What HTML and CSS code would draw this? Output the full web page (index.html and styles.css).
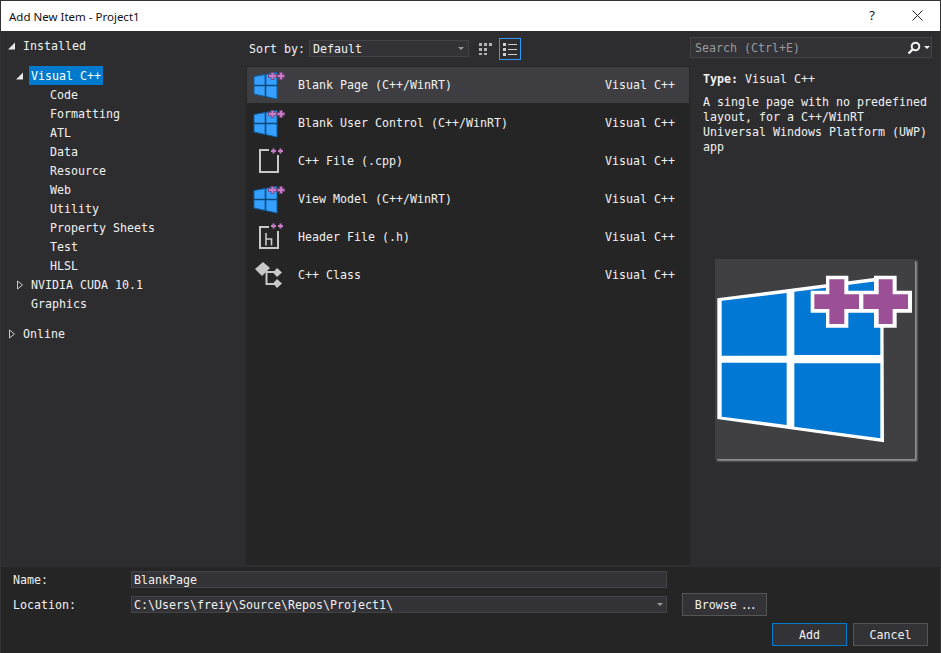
FILE: index.html
```html
<!DOCTYPE html>
<html lang="en">
<head>
    <meta charset="UTF-8">
    <meta name="viewport" content="width=device-width, initial-scale=1.0">
    <title>Add New Item - Project1</title>
    <link rel="stylesheet" href="styles.css">
</head>
<body>
    <svg class="defs" width="0" height="0">
        <symbol id="ico-win" viewBox="0 0 36 32">
            <path d="M4 7.500 27 3.500V30L4 25Z" fill="#35a0ff" stroke="#0e5f9f" stroke-width="1"/>
            <path d="M15.500 5.500V28M4 16.500H27" stroke="#0d4a78" stroke-width="1.600"/>
            <path d="M18 7H27M22.500 3V11M27 7H35M31 3V11" stroke="#7d4580" stroke-width="3.600"/>
            <path d="M19 7H26M22.500 4V10M28 7H34M31 4V10" stroke="#c77cc7" stroke-width="2"/>
        </symbol>
        <symbol id="ico-file" viewBox="0 0 36 32">
            <path d="M19 5H10V27H28V10" fill="none" stroke="#c8c8c8" stroke-width="2"/>
            <path d="M21 6H26M23.500 3.500V8.500M28 6H33M30.500 3.500V8.500" stroke="#c77cc7" stroke-width="2"/>
        </symbol>
        <symbol id="ico-header" viewBox="0 0 36 32">
            <path d="M19 6H10V27H28V10" fill="none" stroke="#c8c8c8" stroke-width="2"/>
            <path d="M16 12V24.500M16 18H21.500V24.500" fill="none" stroke="#c8c8c8" stroke-width="1.600"/>
            <path d="M21 5H26M23.500 2.500V7.500M28 5H33M30.500 2.500V7.500" stroke="#c77cc7" stroke-width="2"/>
        </symbol>
        <symbol id="ico-class" viewBox="0 0 36 32">
            <path d="M5 10 13 3 20 9 12 17Z" fill="#c8c8c8"/>
            <path d="M27 9 32 13.500 27 18 23 13.500ZM27 20 32 24.500 27 29 23 24.500Z" fill="#c8c8c8"/>
            <path d="M16 13H25M16.500 13V25H25" fill="none" stroke="#c8c8c8" stroke-width="2"/>
        </symbol>
        <symbol id="arrow-open" viewBox="0 0 8 8">
            <path d="M7 0.500V7.500H0Z" fill="#e8e8e8"/>
        </symbol>
        <symbol id="arrow-closed" viewBox="0 0 8 10">
            <path d="M1.500 1 6.500 5 1.500 9Z" fill="none" stroke="#c8c8c8" stroke-width="1"/>
        </symbol>
    </svg>

    <div class="window">
        <div class="titlebar">
            <span class="title-text">Add New Item - Project1</span>
            <span class="help">?</span>
            <svg class="close" width="11" height="11" viewBox="0 0 11 11">
                <path d="M0.500 0.500 10.500 10.500M10.500 0.500 0.500 10.500" stroke="#222" stroke-width="1"/>
            </svg>
        </div>

        <div class="main">
            <div class="sidebar">
                <div class="tree-row lvl0"><svg class="arrow"><use href="#arrow-open"/></svg><span>Installed</span></div>
                <div class="tree-group">
                    <div class="tree-row lvl1"><svg class="arrow"><use href="#arrow-open"/></svg><span class="selected">Visual C++</span></div>
                    <div class="tree-row lvl2">Code</div>
                    <div class="tree-row lvl2">Formatting</div>
                    <div class="tree-row lvl2">ATL</div>
                    <div class="tree-row lvl2">Data</div>
                    <div class="tree-row lvl2">Resource</div>
                    <div class="tree-row lvl2">Web</div>
                    <div class="tree-row lvl2">Utility</div>
                    <div class="tree-row lvl2">Property Sheets</div>
                    <div class="tree-row lvl2">Test</div>
                    <div class="tree-row lvl2">HLSL</div>
                    <div class="tree-row lvl1"><svg class="arrow"><use href="#arrow-closed"/></svg><span class="tree-label">NVIDIA CUDA 10.1</span></div>
                    <div class="tree-row lvl1-plain">Graphics</div>
                </div>
                <div class="tree-row lvl0 online"><svg class="arrow"><use href="#arrow-closed"/></svg><span>Online</span></div>
            </div>

            <div class="middle">
                <div class="toolbar">
                    <span class="sort-label">Sort by:</span>
                    <div class="combo">
                        <span>Default</span>
                        <span class="caret"></span>
                    </div>
                    <svg class="view-grid" width="16" height="16" viewBox="0 0 16 16">
                        <path d="M1 2H4V5H1ZM6 2H9V5H6ZM11 2H14V5H11ZM1 7H4V10H1ZM6 7H9V10H6ZM1 12H4V14H1ZM6 12H9V14H6Z" fill="#b4b4b4"/>
                    </svg>
                    <div class="view-list">
                        <svg width="14" height="14" viewBox="0 0 14 14">
                            <path d="M0 1H3V4H0ZM0 6H3V9H0ZM0 11H3V14H0Z" fill="#d0d0d0"/>
                            <path d="M5 2.500H14M5 7.500H14M5 12.500H14" stroke="#d0d0d0" stroke-width="1"/>
                        </svg>
                    </div>
                </div>
                <div class="item-list">
                    <div class="item active">
                        <svg class="item-icon"><use href="#ico-win"/></svg>
                        <span class="item-name">Blank Page (C++/WinRT)</span>
                        <span class="item-lang">Visual C++</span>
                    </div>
                    <div class="item">
                        <svg class="item-icon"><use href="#ico-win"/></svg>
                        <span class="item-name">Blank User Control (C++/WinRT)</span>
                        <span class="item-lang">Visual C++</span>
                    </div>
                    <div class="item">
                        <svg class="item-icon"><use href="#ico-file"/></svg>
                        <span class="item-name">C++ File (.cpp)</span>
                        <span class="item-lang">Visual C++</span>
                    </div>
                    <div class="item">
                        <svg class="item-icon"><use href="#ico-win"/></svg>
                        <span class="item-name">View Model (C++/WinRT)</span>
                        <span class="item-lang">Visual C++</span>
                    </div>
                    <div class="item">
                        <svg class="item-icon"><use href="#ico-header"/></svg>
                        <span class="item-name">Header File (.h)</span>
                        <span class="item-lang">Visual C++</span>
                    </div>
                    <div class="item">
                        <svg class="item-icon"><use href="#ico-class"/></svg>
                        <span class="item-name">C++ Class</span>
                        <span class="item-lang">Visual C++</span>
                    </div>
                </div>
            </div>

            <div class="details">
                <div class="search">
                    <span class="search-text">Search (Ctrl+E)</span>
                    <svg width="14" height="14" viewBox="0 0 14 14">
                        <circle cx="8.500" cy="5.500" r="3.800" fill="none" stroke="#f1f1f1" stroke-width="2"/>
                        <path d="M5.500 8.500 1.500 12.500" stroke="#f1f1f1" stroke-width="2.400"/>
                    </svg>
                    <span class="caret light"></span>
                </div>
                <div class="type-line"><b>Type:</b> Visual C++</div>
                <p class="description">A single page with no predefined layout, for a C++/WinRT Universal Windows Platform (UWP) app</p>
                <div class="preview">
                    <svg width="200" height="200" viewBox="45 27 600 600">
                        <path d="M52 145 550 80 552 577 52 507Z" fill="#fff"/>
                        <path d="M65 152 260 129V317H65ZM283 125 541 92V315H283ZM65 338H260V525L65 500ZM283 340H541V565L283 530Z" fill="#0078d4"/>
                        <path d="M378 77H445V122H490V188H445V233H378V188H332V122H378ZM522 77H590V122H636V188H590V233H522V188H478V122H522Z" fill="#fff"/>
                        <path d="M388 88H433V133H477V177H433V222H388V177H343V133H388ZM536 88H578V133H624V177H578V222H536V177H490V133H536Z" fill="#9b4f96"/>
                    </svg>
                </div>
            </div>
        </div>

        <div class="footer">
            <label class="field-label">Name:</label>
            <div class="input">BlankPage</div>
            <span></span>
            <label class="field-label">Location:</label>
            <div class="input with-caret">
                <span>C:\Users\freiy\Source\Repos\Project1\</span>
                <span class="caret"></span>
            </div>
            <button class="btn browse" type="button">Browse <span class="dots">...</span></button>
            <div class="actions">
                <button class="btn primary" type="button">Add</button>
                <button class="btn" type="button">Cancel</button>
            </div>
        </div>
    </div>
</body>
</html>
```

FILE: styles.css
```css
* {
    margin: 0;
    padding: 0;
    box-sizing: border-box;
}

:root {
    --bg-color: #2d2d30;
    --dark-bg: #252526;
    --hover-bg: #3e3e42;
    --field-bg: #333337;
    --border-color: #434346;
    --text-color: #f1f1f1;
    --main-color: #007acc;
}

html, body {
    width: 941px;
    height: 653px;
    overflow: hidden;
}

body {
    background: var(--bg-color);
    color: var(--text-color);
    font-family: "DejaVu Sans Mono", monospace;
    font-size: 11.63px;
}

.defs {
    position: absolute;
}

.window {
    width: 941px;
    height: 653px;
    border: 1px solid #333;
    border-bottom: none;
    display: flex;
    flex-direction: column;
}

.titlebar {
    height: 30px;
    flex: none;
    background: #fff;
    color: #111;
    display: flex;
    align-items: center;
    padding: 0 17px 0 8px;
    font-family: "Noto Sans", sans-serif;
    font-size: 11.5px;
}

.title-text {
    flex: 1;
}

.help {
    margin: 0 37px 2px 0;
    font-size: 13px;
}

.close {
    margin-bottom: 2px;
}

.main {
    flex: 1;
    display: flex;
    min-height: 0;
}

/* left tree */
.sidebar {
    width: 245px;
    flex: none;
    padding-top: 5px;
}

.tree-row {
    height: 19px;
    display: flex;
    align-items: center;
    white-space: nowrap;
}

.tree-group {
    margin-top: 11px;
}

.arrow {
    width: 8px;
    height: 10px;
    flex: none;
}

.lvl0 {
    padding-left: 7px;
}

.lvl0 .arrow {
    margin-right: 7px;
}

.lvl1 {
    padding-left: 15px;
}

.lvl1 .arrow {
    margin-right: 5px;
}

.tree-label {
    padding-left: 2px;
}

.lvl1-plain {
    padding-left: 30px;
}

.lvl2 {
    padding-left: 49px;
}

.selected {
    background: var(--main-color);
    color: #fff;
    height: 19px;
    line-height: 21px;
    padding: 0 2px;
}

.online {
    margin-top: 11px;
}

/* middle list */
.middle {
    width: 444px;
    flex: none;
    display: flex;
    flex-direction: column;
}

.toolbar {
    height: 35px;
    flex: none;
    display: flex;
    align-items: center;
    padding-left: 3px;
}

.sort-label {
    width: 60px;
    flex: none;
}

.combo {
    width: 160px;
    height: 17px;
    background: var(--field-bg);
    border: 1px solid var(--border-color);
    display: flex;
    align-items: center;
    justify-content: space-between;
    padding: 0 4px 0 3px;
}

.caret {
    width: 0;
    height: 0;
    border-left: 3px solid transparent;
    border-right: 3px solid transparent;
    border-top: 3px solid #999;
}

.caret.light {
    border-top-color: #f1f1f1;
    margin-left: 3px;
}

.view-grid {
    margin-left: 9px;
}

.view-list {
    width: 22px;
    height: 22px;
    margin-left: 5px;
    border: 1px solid #3399ff;
    display: flex;
    align-items: center;
    justify-content: center;
}

.item-list {
    flex: 1;
    background: var(--dark-bg);
    padding: 1px;
    margin-bottom: 2px;
}

.item {
    height: 36px;
    margin-bottom: 2px;
    display: flex;
    align-items: center;
    padding-right: 14px;
}

.item.active {
    background: var(--hover-bg);
}

.item-icon {
    width: 36px;
    height: 32px;
    flex: none;
    margin: 0 12px 0 3px;
}

.item-name {
    flex: 1;
}

/* right panel */
.details {
    flex: 1;
    padding-top: 6px;
}

.search {
    width: 242px;
    height: 21px;
    background: var(--field-bg);
    border: 1px solid var(--border-color);
    display: flex;
    align-items: center;
    padding: 0 1px 0 4px;
}

.search-text {
    flex: 1;
    color: #999;
}

.type-line {
    margin: 14px 0 0 13px;
    line-height: 15px;
}

.description {
    width: 228px;
    margin: 8px 0 0 13px;
    line-height: 15px;
}

.preview {
    width: 200px;
    height: 200px;
    margin: 104px 0 0 25px;
    background: #404042;
    box-shadow: 2px 2px 2px #999;
}

.preview svg {
    display: block;
}

/* name + location */
.footer {
    height: 86px;
    flex: none;
    background: var(--dark-bg);
    padding: 4px 12px 0;
    display: grid;
    grid-template-columns: 118px 536px 100px;
    grid-auto-rows: min-content;
    row-gap: 5px;
    align-items: center;
}

.input {
    height: 17px;
    background: var(--field-bg);
    border: 1px solid var(--border-color);
    display: flex;
    align-items: center;
    padding: 0 2px;
}

.with-caret {
    justify-content: space-between;
    padding-right: 3px;
}

.btn {
    height: 23px;
    background: var(--field-bg);
    border: 1px solid #555;
    color: var(--text-color);
    font-family: inherit;
    font-size: inherit;
}

.browse {
    margin-left: 15px;
    width: 85px;
    word-spacing: -3px;
}

.dots {
    letter-spacing: -2.5px;
}

.actions {
    grid-column: 1 / -1;
    display: flex;
    justify-content: flex-end;
    gap: 6px;
    width: 915px;
    margin-top: 2px;
}

.actions .btn {
    width: 75px;
}

.btn.primary {
    border-color: var(--main-color);
}
```
